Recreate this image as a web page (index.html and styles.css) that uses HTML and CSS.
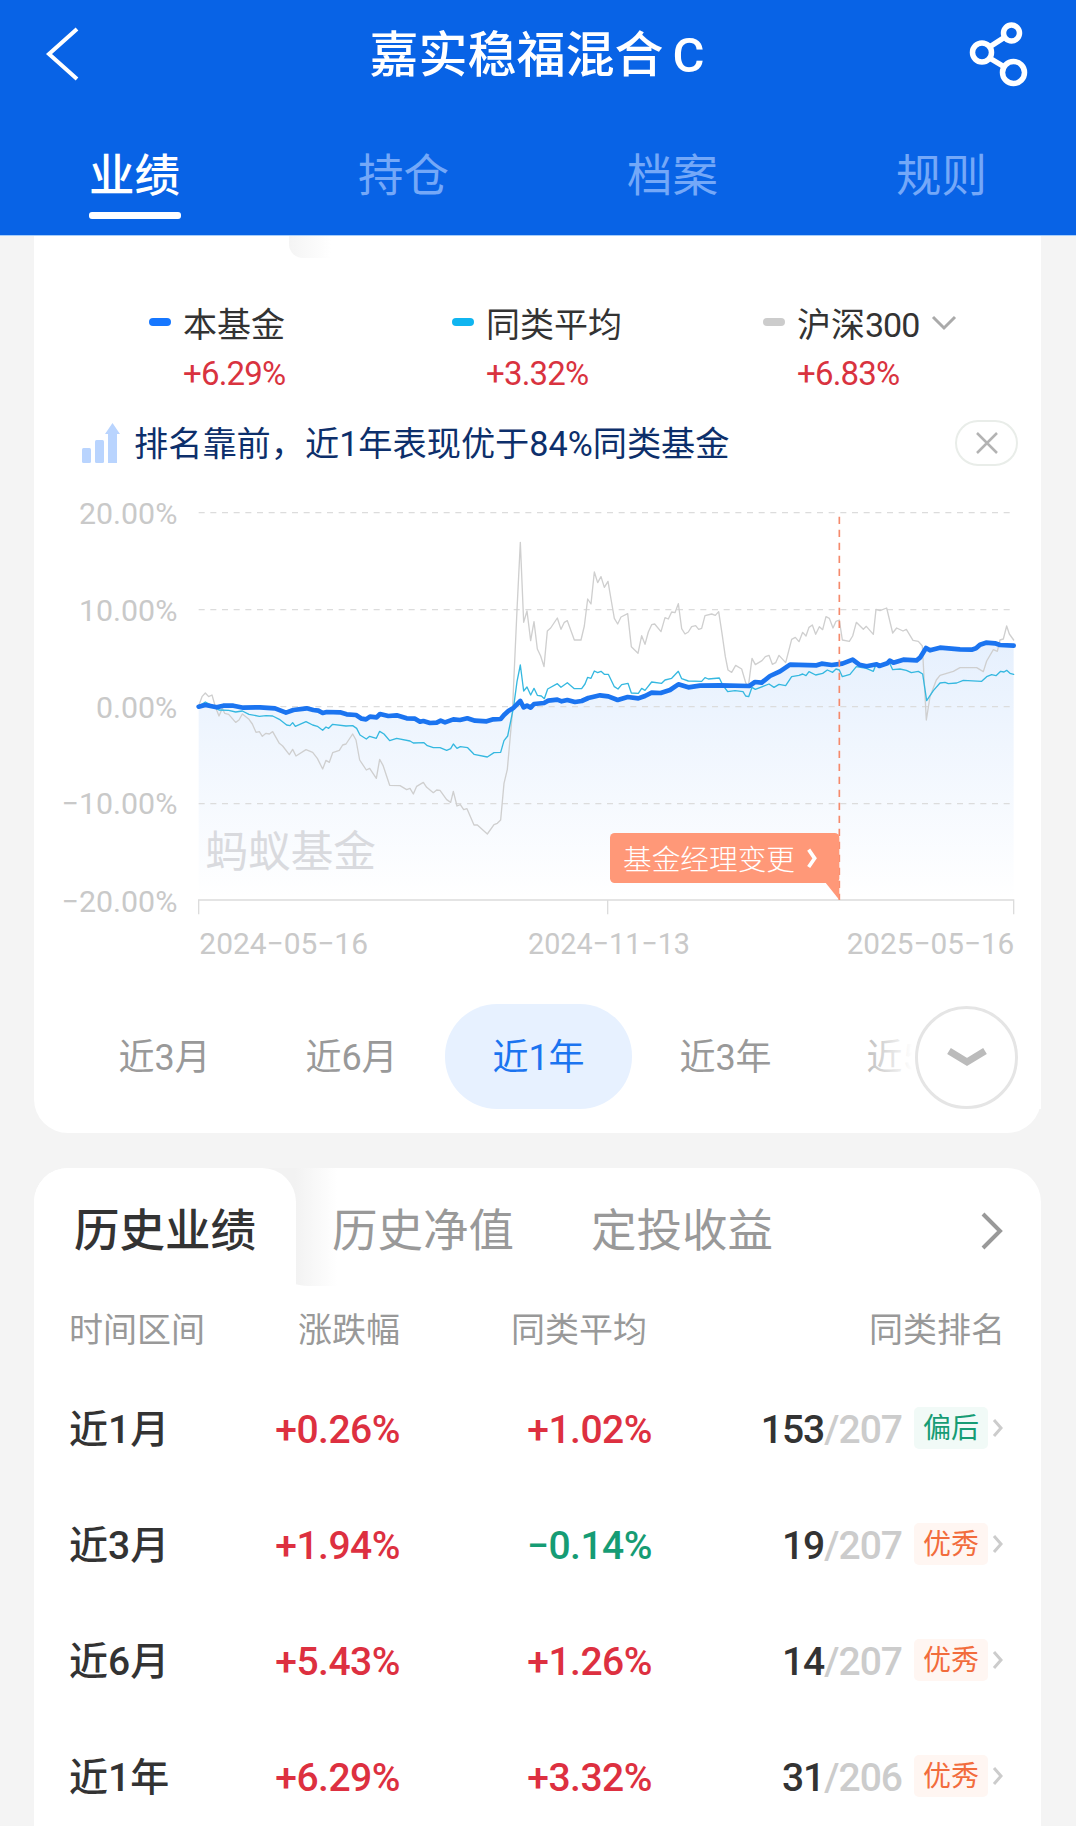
FILE: index.html
```html
<!DOCTYPE html>
<html lang="zh-CN">
  <head>
    <meta charset="UTF-8" />
    <meta name="viewport" content="width=device-width, initial-scale=1.0" />
    <title>嘉实稳福混合C</title>

    <link rel="stylesheet" href="styles.css">
  </head>
  <body>
    <header class="header">
      <div class="title-bar">
        <svg class="back" width="40" height="60" viewBox="0 0 40 60">
          <path d="M35 4 L7 29 L35 54" fill="none" stroke="#fff" stroke-width="4" />
        </svg>
        <h1>嘉实稳福混合<span class="share-class">C</span></h1>
        <svg class="share" width="64" height="68" viewBox="0 0 64 68">
          <g fill="none" stroke="#fff" stroke-width="5.500">
            <circle cx="42.500" cy="12" r="8" />
            <circle cx="13" cy="31.500" r="9.500" />
            <circle cx="44.500" cy="51.500" r="11" />
            <path d="M20.500 26 L36 16 M20.500 37 L35.500 46" />
          </g>
        </svg>
      </div>

      <nav class="tabs">
        <div class="tab selected">业绩</div>
        <div class="tab">持仓</div>
        <div class="tab">档案</div>
        <div class="tab">规则</div>
      </nav>
    </header>

    <section class="card chart-card">
      <div class="legend">
        <div class="legend-item">
          <div class="name"><i class="dash dash-fund"></i>本基金</div>
          <div class="value">+6.29%</div>
        </div>
        <div class="legend-item">
          <div class="name"><i class="dash dash-average"></i>同类平均</div>
          <div class="value">+3.32%</div>
        </div>
        <div class="legend-item">
          <div class="name">
            <i class="dash dash-index"></i>沪深<span class="digits">300</span>
            <svg class="arrow" width="26" height="18" viewBox="0 0 26 18">
              <path d="M2 3 L13 14 L24 3" fill="none" stroke="#aaa" stroke-width="3" />
            </svg>
          </div>
          <div class="value">+6.83%</div>
        </div>
      </div>

      <div class="notice">
        <svg width="40" height="42" viewBox="0 0 40 42" fill="#b9d4fe">
          <rect x="1" y="26" width="9" height="15" rx="1.500" />
          <rect x="14" y="18" width="9" height="23" rx="1.500" />
          <path d="M27 41 V12 H24 L31.500 1 L39 12 H36 V41 Z" />
        </svg>
        <span class="notice-text">排名靠前，近1年表现优于84%同类基金</span>
        <button class="close">
          <svg width="24" height="24" viewBox="0 0 24 24">
            <path d="M2 2 L22 22 M22 2 L2 22" stroke="#b3b3b3" stroke-width="2.500" />
          </svg>
        </button>
      </div>

      <svg class="chart" width="1007" height="490" viewBox="-438 -48 3021 1470">
        <defs>
          <linearGradient id="area" gradientUnits="userSpaceOnUse" x1="0" y1="430" x2="0" y2="1200">
            <stop offset="0" stop-color="#1d78f2" stop-opacity="0.11" />
            <stop offset="1" stop-color="#1d78f2" stop-opacity="0" />
          </linearGradient>
        </defs>

        <path fill="url(#area)" d="M56 1200 V620 L76 615 110 622 130 617 160 617 190 623 240 622 285 625 318 638 340 630 380 625 400 630 428 639 480 637 528 645 545 656 558 658 570 650 590 652 600 642 650 646 705 656 750 669 820 658 862 655 920 664 962 657 985 633 1021 603 1031 622 1092 609 1132 599 1185 606 1225 594 1260 586 1313 600 1375 595 1415 578 1470 570 1495 553 1525 562 1560 557 1708 558 1745 548 1800 514 1830 494 1910 496 1987 491 2018 479 2060 499 2098 498 2129 482 2170 479 2210 481 2238 444 2280 443 2375 449 2418 428 2460 435 2501 437 V1200 Z" />

        <g class="grid">
          <path d="M56 38 H2501 M56 329 H2501 M56 620 H2501 M56 911 H2501" />
        </g>
        <path class="axis" d="M56 1243 V1200 H2501 V1243 M1283 1200 V1243" />

        <text class="watermark" x="76" y="1101">蚂蚁基金</text>

        <polyline class="line line-index" points="56,618 66,590 76,579 86,590 96,585 106,620 117,648 127,625 134,640 146,643 167,667 177,660 187,642 207,658 217,672 228,697 238,695 247,709 258,700 268,702 278,695 298,730 308,738 328,764 338,748 348,768 378,749 398,757 412,775 428,807 438,781 448,787 458,758 478,751 488,735 498,732 518,702 528,720 539,780 559,810 569,805 589,835 599,778 609,796 629,856 660,857 680,869 690,865 700,882 710,859 730,847 740,862 760,878 770,870 780,871 800,899 812,907 820,874 831,918 841,914 851,929 861,926 882,975 892,975 922,1002 942,974 952,970 962,960 972,850 982,808 997,640 1011,330 1021,127 1031,367 1041,333 1052,422 1062,365 1072,447 1082,468 1092,500 1102,393 1112,384 1132,354 1143,388 1153,367 1162,362 1183,420 1203,420 1213,378 1223,297 1233,312 1243,216 1253,248 1263,230 1273,262 1284,244 1294,303 1303,355 1313,372 1323,351 1343,341 1354,440 1374,460 1385,407 1395,433 1405,396 1415,374 1424,372 1443,395 1455,353 1465,357 1475,336 1485,338 1495,311 1505,386 1515,402 1525,396 1535,380 1547,377 1556,388 1565,385 1575,347 1595,342 1606,346 1616,335 1626,400 1636,470 1644,510 1655,517 1667,496 1685,507 1697,548 1705,560 1716,475 1726,494 1746,482 1756,470 1767,466 1777,493 1787,488 1797,466 1817,488 1835,418 1846,412 1857,425 1868,397 1878,408 1887,382 1897,375 1907,403 1918,380 1928,389 1938,350 1948,355 1959,384 1968,364 1978,360 1987,420 2008,424 2018,408 2029,367 2050,388 2059,379 2080,403 2088,328 2100,332 2120,324 2138,399 2150,384 2169,393 2179,388 2199,421 2215,424 2227,438 2239,660 2250,590 2269,540 2280,526 2320,514 2340,503 2390,503 2410,515 2420,483 2440,449 2452,454 2460,420 2470,417 2480,378 2488,402 2501,420" />
        <polyline class="line line-average" points="56,618 76,606 96,616 117,630 146,631 167,636 187,633 207,643 238,649 258,647 278,648 298,658 320,675 330,677 338,668 346,679 378,665 398,675 412,679 428,691 438,681 446,685 458,673 498,678 518,677 530,685 540,705 559,717 569,709 589,715 599,694 612,702 629,722 650,715 690,723 700,729 732,728 742,737 760,743 780,743 800,751 812,746 820,732 831,745 841,740 863,743 882,763 922,771 942,758 962,757 972,722 983,708 1001,620 1011,545 1021,495 1031,573 1041,561 1052,585 1062,565 1072,586 1084,588 1093,596 1103,567 1132,551 1143,562 1162,548 1183,566 1205,566 1215,552 1223,532 1233,535 1243,513 1253,518 1263,514 1273,523 1285,523 1303,560 1314,567 1325,554 1344,550 1354,579 1375,580 1385,565 1395,571 1415,546 1445,550 1455,540 1475,535 1495,514 1505,536 1525,543 1565,544 1575,533 1585,537 1618,534 1628,555 1643,575 1665,572 1689,575 1697,588 1706,590 1716,562 1726,568 1767,552 1782,562 1797,553 1817,557 1835,530 1857,526 1868,522 1878,527 1887,515 1907,525 1928,520 1942,510 1958,517 1968,507 1978,510 1987,530 2010,523 2029,500 2059,505 2080,514 2088,494 2110,496 2129,490 2138,509 2160,507 2179,511 2194,518 2215,514 2228,522 2240,602 2260,572 2280,549 2295,547 2305,551 2330,549 2350,541 2405,544 2420,530 2435,524 2448,527 2462,514 2472,516 2480,511 2490,520 2501,523" />
        <polyline class="line line-fund" points="56,620 76,615 110,622 130,617 160,617 190,623 240,622 285,625 318,638 340,630 380,625 400,630 415,632 428,639 440,636 480,637 500,643 528,645 545,656 558,658 570,650 590,652 600,642 625,648 650,646 680,655 705,656 720,665 730,663 750,669 770,668 782,662 795,667 820,658 840,660 862,655 885,662 920,664 940,658 962,657 972,645 985,633 1001,623 1021,603 1031,622 1041,617 1052,623 1062,612 1092,609 1105,602 1132,599 1145,604 1162,600 1185,606 1205,603 1225,594 1260,586 1285,589 1313,600 1343,591 1375,595 1395,588 1415,578 1442,579 1470,570 1495,553 1525,562 1560,557 1620,556 1708,558 1725,546 1745,548 1770,528 1800,514 1830,494 1910,496 1925,491 1955,495 1987,491 2018,479 2038,494 2060,499 2090,493 2098,498 2122,490 2129,482 2140,488 2170,479 2210,481 2220,473 2238,444 2250,451 2280,443 2340,448 2375,449 2388,445 2400,434 2418,428 2445,430 2460,435 2501,437" />

        <path class="event-line" d="M1978 50 V1200" />
        <path class="event-tag" d="M1932 1142 H1978 V1200 Z" />
        <rect class="event-tag" x="1290" y="999" width="688" height="150" rx="14" />
        <text class="event-text" x="1329" y="1110">基金经理变更</text>
        <path d="M1886 1049 L1904 1075 L1886 1101" fill="none" stroke="#fff" stroke-width="11" />

        <g class="y-labels">
          <text x="-8" y="72">20.00%</text>
          <text x="-8" y="363">10.00%</text>
          <text x="-8" y="653">0.00%</text>
          <text x="-8" y="943">−10.00%</text>
          <text x="-8" y="1235">−20.00%</text>
        </g>
        <g class="x-labels">
          <text x="58" y="1361" textLength="506" lengthAdjust="spacingAndGlyphs">2024−05−16</text>
          <text x="1044" y="1361" textLength="486" lengthAdjust="spacingAndGlyphs">2024−11−13</text>
          <text x="2000" y="1361" textLength="503" lengthAdjust="spacingAndGlyphs">2025−05−16</text>
        </g>
      </svg>

      <div class="periods">
        <div class="period">近3月</div>
        <div class="period">近6月</div>
        <div class="period selected">近1年</div>
        <div class="period">近3年</div>
        <div class="period">近5年</div>
        <div class="more">
          <div class="more-button">
            <svg width="40" height="24" viewBox="0 0 40 24">
              <path d="M2 6 L20 17 L38 6" fill="none" stroke="#bbb" stroke-width="7" />
            </svg>
          </div>
        </div>
      </div>
    </section>

    <section class="card history-card">
      <div class="history-tabs">
        <div class="history-tab selected">历史业绩</div>
        <div class="history-tab">历史净值</div>
        <div class="history-tab">定投收益</div>
        <svg class="arrow" width="24" height="40" viewBox="0 0 24 40">
          <path d="M3 3 L20 20 L3 37" fill="none" stroke="#999" stroke-width="4" />
        </svg>
      </div>

      <div class="row head">
        <div class="range">时间区间</div>
        <div class="change">涨跌幅</div>
        <div class="average">同类平均</div>
        <div class="rank">同类排名</div>
      </div>

      <div class="row">
        <div class="range">近1月</div>
        <div class="change up">+0.26%</div>
        <div class="average up">+1.02%</div>
        <div class="rank">153<span class="total">/207</span><span class="level low">偏后</span><svg width="12" height="20" viewBox="0 0 12 20"><path d="M2 2 L9 10 L2 18" /></svg></div>
      </div>

      <div class="row">
        <div class="range">近3月</div>
        <div class="change up">+1.94%</div>
        <div class="average down">−0.14%</div>
        <div class="rank">19<span class="total">/207</span><span class="level">优秀</span><svg width="12" height="20" viewBox="0 0 12 20"><path d="M2 2 L9 10 L2 18" /></svg></div>
      </div>

      <div class="row">
        <div class="range">近6月</div>
        <div class="change up">+5.43%</div>
        <div class="average up">+1.26%</div>
        <div class="rank">14<span class="total">/207</span><span class="level">优秀</span><svg width="12" height="20" viewBox="0 0 12 20"><path d="M2 2 L9 10 L2 18" /></svg></div>
      </div>

      <div class="row">
        <div class="range">近1年</div>
        <div class="change up">+6.29%</div>
        <div class="average up">+3.32%</div>
        <div class="rank">31<span class="total">/206</span><span class="level">优秀</span><svg width="12" height="20" viewBox="0 0 12 20"><path d="M2 2 L9 10 L2 18" /></svg></div>
      </div>
    </section>
  </body>
</html>
```
FILE: styles.css
```css
* {
  box-sizing: border-box;
}

body {
  margin: 0;
  height: 1826px;
  overflow: hidden;
  background: #f4f4f4;
  color: #333;
  font-family: Roboto, "Noto Sans CJK SC", sans-serif;
}

.header {
  height: 236px;
  border-bottom: 1px solid #a5cdfb;
  background: #0863e6;
  color: white;
}

.title-bar {
  display: flex;
  align-items: center;
  justify-content: space-between;
  height: 110px;
  padding: 0 43px 0 42px;
}

.title-bar h1 {
  margin: -3px 0 0 23px;
  font-family: "Noto Sans CJK SC", sans-serif;
  font-size: 49px;
  font-weight: 500;
  line-height: 70px;
}

.share-class {
  margin-left: 9px;
  font-family: Roboto, sans-serif;
}

.tabs {
  display: flex;
}

.tab {
  display: flex;
  flex: 1;
  flex-direction: column;
  align-items: center;
  color: #74a8f8;
  font-size: 45.5px;
  line-height: 66px;
  padding-top: 34px;
}

.tab.selected {
  color: white;
  font-weight: 500;
}

.tab.selected::after {
  content: "";
  width: 92px;
  height: 7px;
  margin-top: 2px;
  border-radius: 3px;
  background: white;
}

.card {
  width: 1007px;
  margin-left: 34px;
  background: white;
}

.chart-card {
  position: relative;
  height: 897px;
  border-radius: 0 0 34px 34px;
}

/* fading edge beside the selected tab */
.chart-card::before,
.history-tabs::before {
  content: "";
  position: absolute;
  top: 0;
  left: 255px;
  width: 42px;
  height: 22px;
  border-bottom-left-radius: 14px;
  background: linear-gradient(to right, #f4f4f4, white);
}

.legend {
  display: flex;
  height: 179px;
  padding: 64px 0 0 115px;
}

.legend-item {
  flex: none;
  width: 303px;
}

.legend-item:nth-child(2) {
  width: 311px;
}

.name {
  display: flex;
  align-items: center;
  font-size: 34px;
  line-height: 50px;
  white-space: nowrap;
}

.dash {
  width: 22px;
  height: 8px;
  margin: -6px 12px 0 0;
  border-radius: 4px;
}

.dash-fund {
  background: #1677ff;
}

.dash-average {
  background: #10b5f0;
}

.dash-index {
  background: #ccc;
}

.digits {
  letter-spacing: -1px;
}

.name .arrow {
  margin: -4px 0 0 12px;
}

.value {
  padding-left: 34px;
  color: #d9333f;
  font-size: 33px;
  letter-spacing: -0.8px;
  line-height: 48px;
}

.notice {
  display: flex;
  align-items: center;
  height: 56px;
  padding: 0 23px 0 47px;
}

.notice-text {
  margin: -4px 0 0 13px;
  color: #0d2f6b;
  font-size: 34.2px;
}

.close {
  display: flex;
  align-items: center;
  justify-content: center;
  width: 63px;
  height: 46px;
  margin-left: auto;
  border: 2px solid #e9ede9;
  border-radius: 23px;
  background: white;
}

.chart {
  display: block;
  margin-top: 13px;
}

.grid path {
  fill: none;
  stroke: #dcdcdc;
  stroke-width: 4;
  stroke-dasharray: 18 17;
}

.axis {
  fill: none;
  stroke: #dcdcdc;
  stroke-width: 4;
}

.line {
  fill: none;
  stroke-linejoin: round;
  stroke-linecap: round;
}

.line-index {
  stroke: #cfcfcf;
  stroke-width: 4;
}

.line-average {
  stroke: #35b8e0;
  stroke-width: 4;
}

.line-fund {
  stroke: #1b74f0;
  stroke-width: 14;
}

.watermark {
  fill: #d9dade;
  font-size: 128px;
}

.event-line {
  stroke: #f58a6c;
  stroke-width: 5;
  stroke-dasharray: 22 17;
}

.event-tag {
  fill: #ff9878;
}

.event-text {
  fill: white;
  font-size: 86px;
  font-weight: 300;
}

.y-labels,
.x-labels {
  fill: #c9c9c9;
  font-size: 91px;
}

.y-labels {
  text-anchor: end;
}

.periods {
  display: flex;
  position: relative;
  margin: 30px 0 0 37px;
  overflow: hidden;
}

.period {
  flex: none;
  width: 187px;
  height: 105px;
  color: #999;
  font-size: 36px;
  line-height: 109px;
  text-align: center;
}

.period.selected {
  border-radius: 52px;
  background: #e7f1ff;
  color: #1b74f0;
}

.more {
  display: flex;
  position: absolute;
  top: 0;
  right: 0;
  align-items: center;
  justify-content: flex-end;
  width: 187px;
  height: 105px;
  padding: 1px 23px 0 0;
  background: linear-gradient(to right, rgba(255, 255, 255, 0.2), white 58px);
}

.more-button {
  display: flex;
  align-items: center;
  justify-content: center;
  width: 103px;
  height: 103px;
  border: 3px solid #e5e5e5;
  border-radius: 50%;
  background: white;
}

.history-card {
  height: 700px;
  margin-top: 35px;
  border-radius: 34px 34px 0 0;
}

.history-tabs {
  display: flex;
  position: relative;
  align-items: center;
  height: 118px;
  padding-right: 37px;
}

.history-tabs::before {
  left: 225px;
  width: 78px;
  height: 118px;
  border-bottom-left-radius: 50px;
  background: linear-gradient(to right, #f2f2f2 36px, white);
}

.history-tab {
  position: relative;
  width: 259px;
  padding-top: 9px;
  color: #999;
  font-size: 45.5px;
  line-height: 109px;
}

.history-tab.selected {
  width: 262px;
  margin-right: 36px;
  padding-left: 40px;
  border-radius: 34px 34px 0 0;
  background: white;
  color: #333;
  font-weight: 500;
}

.history-tabs .arrow {
  margin: 8px 0 0 auto;
}

.row {
  display: flex;
  align-items: center;
  height: 116px;
  padding: 0 37px 0 35px;
  font-size: 39px;
  font-weight: 500;
}

.row.head {
  height: 86px;
  padding-bottom: 3px;
  color: #999;
  font-size: 34px;
  font-weight: 400;
}

.range {
  width: 170px;
  margin-top: -8px;
  font-size: 39px;
}

.change {
  width: 161px;
  text-align: right;
  letter-spacing: -0.5px;
}

.average {
  width: 252px;
  text-align: right;
  letter-spacing: -0.5px;
}

.head .range,
.head .change,
.head .average {
  margin-top: 0;
  font-size: 34px;
  letter-spacing: 0;
}

.head .average {
  width: 247px;
}

.up {
  color: #dd3040;
}

.down {
  color: #169c74;
}

.rank {
  display: flex;
  align-items: center;
  margin-left: auto;
  letter-spacing: -1px;
}

.head .rank {
  margin-right: -1px;
  letter-spacing: 0;
}

.total {
  color: #ccc;
}

.level {
  width: 74px;
  height: 42px;
  margin: -5px 4px 0 12px;
  border-radius: 5px;
  background: #fff6f2;
  color: #f26c3c;
  font-size: 28px;
  font-weight: 400;
  letter-spacing: 0;
  line-height: 43px;
  text-align: center;
}

.level.low {
  background: #f1faf7;
  color: #169c74;
}

.rank svg {
  margin-top: -5px;
  fill: none;
  stroke: #ccc;
  stroke-width: 3;
}
```
